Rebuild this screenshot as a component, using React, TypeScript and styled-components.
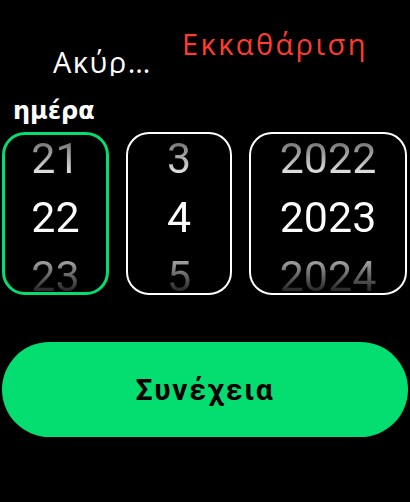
import React from 'react'
import styled, { createGlobalStyle } from 'styled-components'

const GlobalStyle = createGlobalStyle`
  html, body {
    margin: 0;
    padding: 0;
    background: #000;
  }
  body {
    font-family: Roboto, 'Noto Sans', sans-serif;
    color: #fff;
  }
`

type Column = {
  key: string
  width: number
  values: [string, string, string]
  active?: boolean
}

const columns: Column[] = [
  { key: 'day', width: 107, values: ['21', '22', '23'], active: true },
  { key: 'month', width: 106, values: ['3', '4', '5'] },
  { key: 'year', width: 158, values: ['2022', '2023', '2024'] },
]

const App: React.FC = () => {
  return (
    <>
      <GlobalStyle />
      <Screen>
        <Header>
          <CancelButton>Ακύρωση</CancelButton>
          <ClearButton>Εκκαθάριση</ClearButton>
        </Header>
        <FieldLabel>ημέρα</FieldLabel>
        <PickerRow>
          {columns.map((col) => (
            <Wheel key={col.key} $width={col.width} $active={col.active}>
              <WheelStack>
                <WheelItem $pos={'above'}>{col.values[0]}</WheelItem>
                <WheelItem $pos={'current'}>{col.values[1]}</WheelItem>
                <WheelItem $pos={'below'}>{col.values[2]}</WheelItem>
              </WheelStack>
            </Wheel>
          ))}
        </PickerRow>
        <ContinueButton>Συνέχεια</ContinueButton>
      </Screen>
    </>
  )
}

const Screen = styled.div`
  width: 410px;
  height: 502px;
  box-sizing: border-box;
  padding: 29px 0 0 2px;
  display: flex;
  flex-direction: column;
  overflow: hidden;
`

const Header = styled.div`
  display: flex;
  align-items: flex-start;
  padding-left: 51px;
  font-family: 'Open Sans', 'Noto Sans', sans-serif;
  font-size: 29px;
  line-height: 29px;
`

const CancelButton = styled.div`
  width: 100px;
  margin-top: 18px;
  letter-spacing: 1.5px;
  white-space: nowrap;
  overflow: hidden;
  text-overflow: ellipsis;
  color: #fff;
`

const ClearButton = styled.div`
  margin-left: 29px;
  letter-spacing: 2.4px;
  color: #ff3b30;
  white-space: nowrap;
`

const FieldLabel = styled.div`
  margin: 23px 0 0 11px;
  font-family: 'DejaVu Sans', sans-serif;
  font-weight: bold;
  font-size: 24px;
  line-height: 24px;
  color: #fff;
`

const PickerRow = styled.div`
  display: flex;
  gap: 17px;
  margin-top: 9px;
`

const Wheel = styled.div<{ $width: number; $active?: boolean }>`
  width: ${(p) => p.$width}px;
  height: 163px;
  box-sizing: border-box;
  border: ${(p) => (p.$active ? '3px solid #04de71' : '2.5px solid #fff')};
  border-radius: 23px;
  overflow: hidden;
  display: flex;
  flex-direction: column;
  align-items: center;
  justify-content: center;
  padding-top: 7px;
`

const WheelStack = styled.div`
  display: flex;
  flex-direction: column;
  align-items: center;
  flex-shrink: 0;
`

const gradients = {
  above: 'linear-gradient(to bottom, #7a7a7a 25%, #e2e2e2 75%)',
  current: 'linear-gradient(#fff, #fff)',
  below: 'linear-gradient(to bottom, #a0a0a0 25%, #2c2c2c 72%)',
}

const WheelItem = styled.div<{ $pos: 'above' | 'current' | 'below' }>`
  height: 59px;
  font-size: 43px;
  line-height: 59px;
  background-image: ${(p) => gradients[p.$pos]};
  -webkit-background-clip: text;
  background-clip: text;
  color: transparent;
`

const ContinueButton = styled.div`
  width: 406px;
  height: 95px;
  margin-top: 47px;
  border-radius: 48px;
  background: #04de71;
  display: flex;
  align-items: center;
  justify-content: center;
  font-size: 30px;
  font-weight: 700;
  letter-spacing: 1.8px;
  color: #000;
`

export default App
